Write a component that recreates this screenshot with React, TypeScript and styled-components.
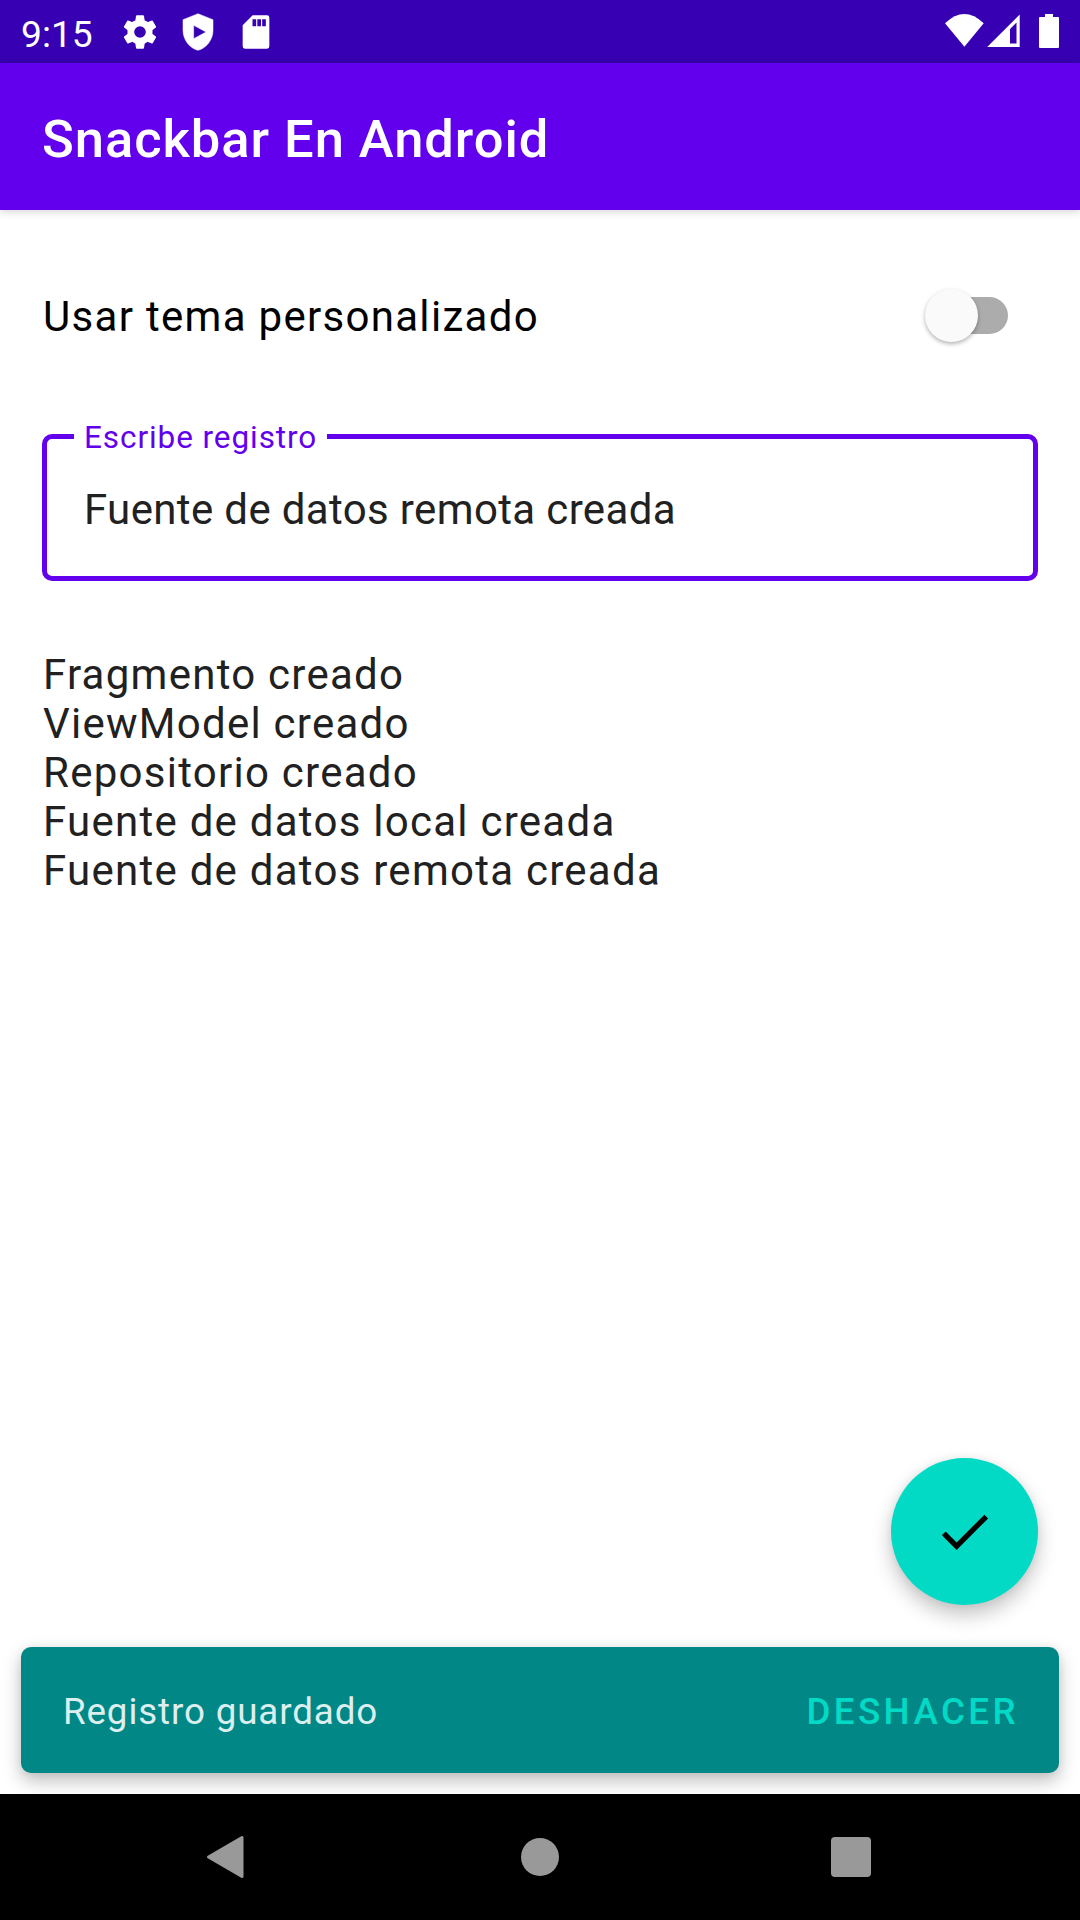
import React from 'react';
import styled, { createGlobalStyle } from 'styled-components';

const Global = createGlobalStyle`
  * { box-sizing: border-box; }
  body { margin: 0; background: #fff; }
`;

const Screen = styled.div`
  width: 1080px;
  height: 1920px;
  display: flex;
  flex-direction: column;
  background: #fff;
  font-family: Roboto, "Liberation Sans", sans-serif;
  overflow: hidden;
`;

const StatusBar = styled.header`
  height: 63px;
  flex: none;
  display: flex;
  align-items: center;
  justify-content: space-between;
  background: #3700b3;
  color: #fff;
  padding: 0 18px 0 21px;
`;

const StatusGroup = styled.div`
  display: flex;
  align-items: center;
  gap: 18px;
`;

const Clock = styled.span`
  font-size: 37.2px;
  line-height: 44px;
  padding-top: 5px;
  width: 81px;
  white-space: nowrap;
`;

const AppBar = styled.div`
  height: 147px;
  flex: none;
  display: flex;
  align-items: center;
  padding: 4px 42px 0;
  background: #6200ee;
  box-shadow: 0 1px 9px rgba(0, 0, 0, 0.2);
`;

const Title = styled.h1`
  margin: 0;
  color: #fff;
  font-size: 52.5px;
  font-weight: 500;
  letter-spacing: 0.95px;
  white-space: nowrap;
`;

const Content = styled.main`
  flex: 1;
  min-height: 0;
  display: flex;
  flex-direction: column;
  padding: 63px 42px 0;
`;

const SwitchRow = styled.label`
  height: 85px;
  display: flex;
  align-items: center;
  justify-content: space-between;
  padding: 0 30px 0 1px;
  color: #000;
  font-size: 42px;
  letter-spacing: 1.3px;
`;

const SwitchLabel = styled.span`
  padding-top: 2px;
`;

const Track = styled.span`
  width: 74px;
  height: 37px;
  border-radius: 19px;
  background: #acacac;
  display: flex;
  align-items: center;
`;

const Thumb = styled.span`
  width: 53px;
  height: 53px;
  flex: none;
  margin-left: -9px;
  border-radius: 50%;
  background: #fafafa;
  box-shadow: 0 2px 4px rgba(0, 0, 0, 0.3);
`;

const Field = styled.fieldset`
  height: 163px;
  margin: 60px 0 0;
  padding: 0 37px;
  border: 5px solid #6200ee;
  border-radius: 10px;
  min-width: 0;
`;

const FieldLabel = styled.legend`
  margin-left: -10px;
  padding: 3px 10px 0;
  color: #6200ee;
  font-size: 31.5px;
  line-height: 34px;
  letter-spacing: 0.92px;
`;

const FieldText = styled.div`
  font-size: 42px;
  line-height: 50px;
  padding-top: 30px;
  letter-spacing: 0.36px;
  color: #212121;
`;

const Log = styled.div`
  margin-top: 69px;
  padding-left: 1px;
  font-size: 42px;
  line-height: 49px;
  letter-spacing: 1.26px;
  color: #212121;
`;

const Fab = styled.button`
  width: 147px;
  height: 147px;
  flex: none;
  align-self: flex-end;
  margin: auto 0 42px;
  padding: 0;
  border: 0;
  border-radius: 50%;
  display: grid;
  place-items: center;
  background: #03dac5;
  box-shadow: 0 10px 20px rgba(0, 0, 0, 0.23), 0 0 8px rgba(0, 0, 0, 0.06);
`;

const Snackbar = styled.div`
  height: 126px;
  flex: none;
  margin: 0 21px 21px;
  padding: 2px 40px 0 42px;
  display: flex;
  align-items: center;
  justify-content: space-between;
  border-radius: 10px;
  background: #018786;
  box-shadow: 0 8px 18px rgba(0, 0, 0, 0.25), 0 0 8px rgba(0, 0, 0, 0.06);
`;

const Message = styled.span`
  color: #dceeee;
  font-size: 36.75px;
  letter-spacing: 0.87px;
`;

const Action = styled.button`
  padding: 0;
  border: 0;
  background: none;
  color: #03dac5;
  font: 500 36.75px Roboto, sans-serif;
  letter-spacing: 3.4px;
`;

const NavBar = styled.nav`
  height: 126px;
  flex: none;
  display: flex;
  justify-content: space-between;
  align-items: center;
  padding: 0 209px 0 206px;
  background: #000;
`;

const entries = [
  'Fragmento creado',
  'ViewModel creado',
  'Repositorio creado',
  'Fuente de datos local creada',
  'Fuente de datos remota creada',
];

export default function App() {
  return (
    <Screen>
      <Global />
      <StatusBar>
        <StatusGroup>
          <Clock>9:15</Clock>
          <svg width="40" height="40" viewBox="0 0 24 24" fill="#fff">
            <circle cx="12" cy="12" r="7.5" />
            {[0, 60, 120, 180, 240, 300].map((a) => (
              <path key={a} d="M9 6.500 9.600 2.400Q9.700 2 10.100 2h3.800Q14.300 2 14.400 2.400L15 6.500z" transform={`rotate(${a} 12 12)`} />
            ))}
            <circle cx="12" cy="12" r="3.5" fill="#3700b3" />
          </svg>
          <svg width="40" height="40" viewBox="0 0 24 24" fill="#fff">
            <path fillRule="evenodd" d="M12 1 3 4.6v6.4c0 5.55 3.84 10.74 9 12 5.16-1.26 9-6.45 9-12V4.6zM9.400 8l7.400 4L9.400 16z" stroke="#fff" strokeWidth=".3" strokeLinejoin="round" />
          </svg>
          <svg width="40" height="40" viewBox="0 0 24 24" fill="#fff">
            <path fillRule="evenodd" d="M18.600 2H10L4 8v12.600A1.400 1.400 0 0 0 5.400 22h13.200a1.400 1.400 0 0 0 1.400-1.400V3.400A1.400 1.400 0 0 0 18.600 2zM12.100 8.600H9.900V4.400h2.200zm2.900 0h-2.200V4.400H15zm2.900 0h-2.200V4.400h2.200z" />
          </svg>
        </StatusGroup>
        <svg width="120" height="41" viewBox="0 0 120 41" fill="#fff">
          <path d="M3 12.300Q22.400-6.300 41.700 12.300L22.400 35.700z" />
          <path fillRule="evenodd" d="M45.200 36 77.700 3.500V36zM68 18v14.500h6.500V11.500z" />
          <path d="M98 6h5V3h8v3h5a1 1 0 0 1 1 1v29a1 1 0 0 1-1 1H98a1 1 0 0 1-1-1V7a1 1 0 0 1 1-1z" />
        </svg>
      </StatusBar>
      <AppBar><Title>Snackbar En Android</Title></AppBar>
      <Content>
        <SwitchRow>
          <SwitchLabel>Usar tema personalizado</SwitchLabel>
          <Track><Thumb /></Track>
        </SwitchRow>
        <Field>
          <FieldLabel>Escribe registro</FieldLabel>
          <FieldText>Fuente de datos remota creada</FieldText>
        </Field>
        <Log>{entries.map((e) => <div key={e}>{e}</div>)}</Log>
        <Fab aria-label="Guardar">
          <svg width="63" height="63" viewBox="0 0 24 24">
            <path d="M9 16.17 4.83 12l-1.42 1.41L9 19 21 7l-1.41-1.41z" />
          </svg>
        </Fab>
      </Content>
      <Snackbar>
        <Message>Registro guardado</Message>
        <Action>DESHACER</Action>
      </Snackbar>
      <NavBar>
        <svg width="42" height="44" viewBox="0 0 42 44"><path d="M36 2.500v39L2.500 22z" fill="#999" stroke="#999" strokeWidth="3" strokeLinejoin="round" /></svg>
        <svg width="38" height="38"><circle cx="19" cy="19" r="19" fill="#999" /></svg>
        <svg width="40" height="40"><rect width="40" height="40" rx="4" fill="#999" /></svg>
      </NavBar>
    </Screen>
  );
}
